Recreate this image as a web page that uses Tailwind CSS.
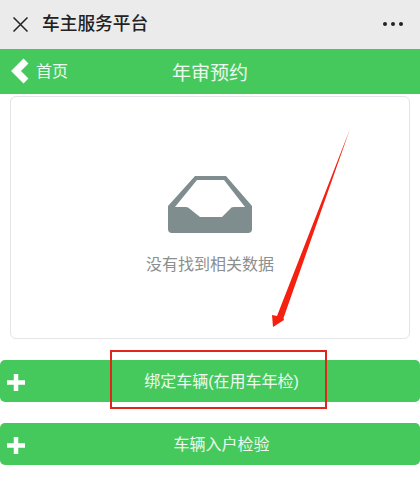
<!DOCTYPE html>
<html lang="zh">
  <head>
    <meta charset="UTF-8" />
    <meta name="viewport" content="width=device-width, initial-scale=1.0" />
    <script src="https://cdn.jsdelivr.net/npm/@tailwindcss/browser@4"></script>
    <title>年审预约</title>
  </head>
  <body class="bg-white font-['Liberation_Sans','Noto_Sans_CJK_SC',sans-serif]">
    <div class="relative w-[420px] h-[500px] overflow-hidden">
      <!-- wechat bar -->
      <div class="h-[49px] bg-[#ebebeb] flex items-center pl-[13px] pr-[17px] pb-[1px]">
        <svg width="15" height="15" viewBox="0 0 15 15" class="shrink-0">
          <path d="M0.500 0.500 L14.500 14.500 M14.500 0.500 L0.500 14.500" stroke="#222" stroke-width="1.500" fill="none" />
        </svg>
        <span class="ml-[14px] pt-[1px] text-[17.700px] font-medium text-[#222] leading-none">车主服务平台</span>
        <div class="ml-auto flex gap-[4px]">
          <span class="w-[4px] h-[4px] rounded-full bg-[#222]"></span>
          <span class="w-[4px] h-[4px] rounded-full bg-[#222]"></span>
          <span class="w-[4px] h-[4px] rounded-full bg-[#222]"></span>
        </div>
      </div>

      <!-- header -->
      <div class="relative h-[45px] bg-[#45c85c] flex items-center justify-center pt-[3px]">
        <div class="absolute left-[11px] top-[9px] flex items-center">
          <svg width="18" height="26" viewBox="0 0 18 26">
            <path d="M15 3 L5 13 L15 23" stroke="#fff" stroke-width="7" fill="none" />
          </svg>
          <span class="ml-[7px] pt-[1px] text-[16px] text-white/90 leading-none">首页</span>
        </div>
        <span class="text-[19px] text-white/90 leading-none">年审预约</span>
      </div>

      <!-- empty card -->
      <div class="mt-[2px] mx-[10px] h-[243px] border border-[#e4e4e8] rounded-[6px] flex flex-col items-center pt-[79px]">
        <svg width="84" height="58" viewBox="0 0 84 58">
          <path fill="#7f8d8f" fill-rule="evenodd" d="M27 0 H58 L84 30 V53 Q84 57 80 57 H4 Q0 57 0 53 V30 Z M29 4 L7 31 H18 Q20 31 22 33 L32 41 H54 L62 33 Q63 31 66 31 H77 L56 4 Z" />
        </svg>
        <span class="mt-[23px] text-[16px] text-[#8a8f90] leading-none">没有找到相关数据</span>
      </div>

      <!-- buttons -->
      <div class="mt-[21px] flex flex-col gap-[21px]">
        <div class="relative h-[42px] bg-[#45c85c] rounded-[5px] flex items-center justify-center pt-[2px]">
          <svg class="absolute left-[7px] top-[14px]" width="18" height="17" viewBox="0 0 18 17"><path d="M9 0 V17 M0 8.500 H18" stroke="#fff" stroke-width="4.500" fill="none" /></svg>
          <span class="ml-[23px] text-[16px] text-white/90 leading-none">绑定车辆(在用车年检)</span>
        </div>
        <div class="relative h-[42px] bg-[#45c85c] rounded-[5px] flex items-center justify-center pt-[2px]">
          <svg class="absolute left-[7px] top-[14px]" width="18" height="17" viewBox="0 0 18 17"><path d="M9 0 V17 M0 8.500 H18" stroke="#fff" stroke-width="4.500" fill="none" /></svg>
          <span class="ml-[23px] text-[16px] text-white/90 leading-none">车辆入户检验</span>
        </div>
      </div>

      <!-- annotations on the screenshot -->
      <svg class="absolute left-0 top-0 pointer-events-none" width="420" height="500" viewBox="0 0 420 500">
        <path fill="#f5200f" d="M350 129 L283.500 318 L284 320 L273 327 L272 315 L277 316 Z" />
      </svg>
      <div class="absolute left-[110px] top-[350px] w-[217px] h-[59px] border-2 border-[#e0261c]"></div>
    </div>
  </body>
</html>
